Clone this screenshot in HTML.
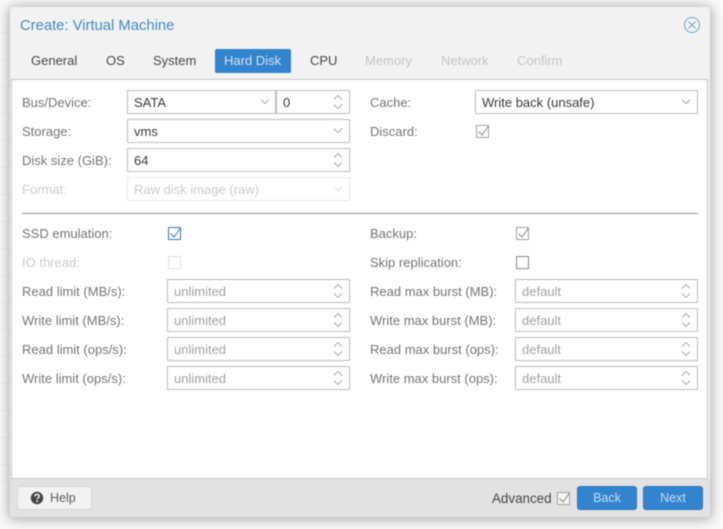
<!DOCTYPE html>
<html><head><meta charset="utf-8"><style>
html,body{margin:0;padding:0;width:723px;height:529px;overflow:hidden;background:#fafafa}
body{position:relative;font:13px/16px "Liberation Sans",Arial,sans-serif;color:#404040}
div,span,svg{position:absolute;box-sizing:border-box}
#w{left:0;top:0;width:723px;height:529px;filter:blur(.4px);background:#fafafa}
.t{white-space:nowrap;margin-top:1px}
.l{color:#757575;white-space:nowrap;margin-top:1px}
.dl{color:#cbcbcb;white-space:nowrap;margin-top:1px}
.f{background:#fff;border:1px solid #bcbcbc;height:24px}
.v{white-space:nowrap;color:#3a3a3a;margin-top:1px}
.p{color:#a2a2a2;white-space:nowrap;margin-top:1px}
.tab{top:53px;white-space:nowrap;color:#484848}
.tab.d{color:#c4c4c4}
.c{width:13px;height:13px;border:1px solid #a0a0a0;background:#fff}
.btn{top:486px;height:24px;width:60px;background:#3384cf;border:1px solid #2d77bb;border-radius:3px;color:#c4dcf2;text-align:center;line-height:22px;font-size:12.5px}
.sl{left:0;height:1px;width:10px;background:#f0f0f0}
svg.d{stroke:#aaa}
</style></head><body><div id="w">
<div class="sl" style="top:32px"></div><div class="sl" style="top:59px"></div><div class="sl" style="top:86px"></div><div class="sl" style="top:113px"></div><div class="sl" style="top:140px"></div><div class="sl" style="top:167px"></div><div class="sl" style="top:194px"></div><div class="sl" style="top:221px"></div><div class="sl" style="top:248px"></div><div class="sl" style="top:275px"></div><div class="sl" style="top:302px"></div><div class="sl" style="top:329px"></div><div class="sl" style="top:356px"></div><div class="sl" style="top:383px"></div><div class="sl" style="top:410px"></div><div class="sl" style="top:437px"></div><div class="sl" style="top:464px"></div><div class="sl" style="top:481px"></div>

<div style="left:10px;top:7px;width:700px;height:510px;background:#f2f2f2;border-radius:4px;box-shadow:0 1px 12px 2px rgba(0,0,0,.3);overflow:hidden">
  <div style="left:0;top:472px;width:700px;height:38px;background:#e2e2e2"></div>
</div>

<div class="t" style="left:20px;top:16px;font-size:14.8px;line-height:18px;color:#4089cc">Create: Virtual Machine</div>
<svg style="left:683px;top:16px" width="18" height="18" viewBox="0 0 18 18" fill="none" stroke="#6aa3d8" stroke-width="1"><circle cx="9" cy="9" r="7.5"/><path d="M5.5 5.5l7 7M12.5 5.5l-7 7"/></svg>

<div class="tab" style="left:31px">General</div>
<div class="tab" style="left:106px">OS</div>
<div class="tab" style="left:153px">System</div>
<div style="left:215px;top:49px;width:76px;height:24px;background:#3384cf;border-radius:2px"></div>
<div class="tab" style="left:224px;color:#cfe2f3">Hard Disk</div>
<div class="tab" style="left:310px">CPU</div>
<div class="tab d" style="left:365px">Memory</div>
<div class="tab d" style="left:441px">Network</div>
<div class="tab d" style="left:517px">Confirm</div>

<div style="left:11px;top:79px;width:697px;height:400px;background:#fff;border:1px solid #c4c4c4;border-bottom-color:#c8c8c8"></div>

<div class="l" style="left:22px;top:94px">Bus/Device:</div>
<div class="f" style="left:127px;top:90px;width:149px"></div>
<div class="v" style="left:134px;top:94px">SATA</div>
<svg class="d" style="left:259px;top:97px" width="12" height="9" fill="none"><path d="M2 2.5l4 4 4-4"/></svg>
<div class="f" style="left:276px;top:90px;width:74px"></div>
<div class="v" style="left:283px;top:94px">0</div>
<svg class="d" style="left:332px;top:94px" width="12" height="16" fill="none"><path d="M2 5.5l4-4 4 4M2 10.5l4 4 4-4"/></svg>

<div class="l" style="left:22px;top:123px">Storage:</div>
<div class="f" style="left:127px;top:119px;width:223px"></div>
<div class="v" style="left:134px;top:123px">vms</div>
<svg class="d" style="left:332px;top:126px" width="12" height="9" fill="none"><path d="M2 2.5l4 4 4-4"/></svg>

<div class="l" style="left:22px;top:152px">Disk size (GiB):</div>
<div class="f" style="left:127px;top:148px;width:223px"></div>
<div class="v" style="left:134px;top:152px">64</div>
<svg class="d" style="left:332px;top:152px" width="12" height="16" fill="none"><path d="M2 5.5l4-4 4 4M2 10.5l4 4 4-4"/></svg>

<div class="dl" style="left:22px;top:181px">Format:</div>
<div class="f" style="left:127px;top:177px;width:223px;border-color:#e6e6e6"></div>
<div class="dl" style="left:134px;top:181px">Raw disk image (raw)</div>
<svg style="left:332px;top:184px" width="12" height="9" fill="none" stroke="#ddd"><path d="M2 2.5l4 4 4-4"/></svg>

<div class="l" style="left:370px;top:94px">Cache:</div>
<div class="f" style="left:475px;top:90px;width:223px"></div>
<div class="v" style="left:482px;top:94px">Write back (unsafe)</div>
<svg class="d" style="left:680px;top:97px" width="12" height="9" fill="none"><path d="M2 2.5l4 4 4-4"/></svg>

<div class="l" style="left:370px;top:123px">Discard:</div>
<div class="c" style="left:476px;top:125px"></div>
<svg style="left:476px;top:125px" width="14" height="13" fill="none" stroke="#888"><path d="M2.5 6.5l3.5 3.5 6.5-9"/></svg>

<div style="left:22px;top:213px;width:676px;height:1px;background:#8e8e8e"></div>

<div class="l" style="left:22px;top:225px">SSD emulation:</div>
<div class="c" style="left:168px;top:227px;border-color:#2a78c4"></div>
<svg style="left:168px;top:227px" width="14" height="13" fill="none" stroke="#2a78c4"><path d="M2.5 6.5l3.5 3.5 6.5-9"/></svg>
<div class="dl" style="left:22px;top:254px">IO thread:</div>
<div class="c" style="left:168px;top:256px;border-color:#e0e0e0"></div>

<div class="l" style="left:370px;top:225px">Backup:</div>
<div class="c" style="left:516px;top:227px"></div>
<svg style="left:516px;top:227px" width="14" height="13" fill="none" stroke="#888"><path d="M2.5 6.5l3.5 3.5 6.5-9"/></svg>
<div class="l" style="left:370px;top:254px">Skip replication:</div>
<div class="c" style="left:516px;top:256px;border-color:#888"></div>

<div class="l" style="left:22px;top:283px">Read limit (MB/s):</div>
<div class="f" style="left:167px;top:279px;width:183px"></div>
<div class="p" style="left:174px;top:283px">unlimited</div>
<svg class="d" style="left:332px;top:283px" width="12" height="16" fill="none"><path d="M2 5.5l4-4 4 4M2 10.5l4 4 4-4"/></svg>
<div class="l" style="left:22px;top:312px">Write limit (MB/s):</div>
<div class="f" style="left:167px;top:308px;width:183px"></div>
<div class="p" style="left:174px;top:312px">unlimited</div>
<svg class="d" style="left:332px;top:312px" width="12" height="16" fill="none"><path d="M2 5.5l4-4 4 4M2 10.5l4 4 4-4"/></svg>
<div class="l" style="left:22px;top:341px">Read limit (ops/s):</div>
<div class="f" style="left:167px;top:337px;width:183px"></div>
<div class="p" style="left:174px;top:341px">unlimited</div>
<svg class="d" style="left:332px;top:341px" width="12" height="16" fill="none"><path d="M2 5.5l4-4 4 4M2 10.5l4 4 4-4"/></svg>
<div class="l" style="left:22px;top:370px">Write limit (ops/s):</div>
<div class="f" style="left:167px;top:366px;width:183px"></div>
<div class="p" style="left:174px;top:370px">unlimited</div>
<svg class="d" style="left:332px;top:370px" width="12" height="16" fill="none"><path d="M2 5.5l4-4 4 4M2 10.5l4 4 4-4"/></svg>

<div class="l" style="left:370px;top:283px">Read max burst (MB):</div>
<div class="f" style="left:515px;top:279px;width:183px"></div>
<div class="p" style="left:522px;top:283px">default</div>
<svg class="d" style="left:680px;top:283px" width="12" height="16" fill="none"><path d="M2 5.5l4-4 4 4M2 10.5l4 4 4-4"/></svg>
<div class="l" style="left:370px;top:312px">Write max burst (MB):</div>
<div class="f" style="left:515px;top:308px;width:183px"></div>
<div class="p" style="left:522px;top:312px">default</div>
<svg class="d" style="left:680px;top:312px" width="12" height="16" fill="none"><path d="M2 5.5l4-4 4 4M2 10.5l4 4 4-4"/></svg>
<div class="l" style="left:370px;top:341px">Read max burst (ops):</div>
<div class="f" style="left:515px;top:337px;width:183px"></div>
<div class="p" style="left:522px;top:341px">default</div>
<svg class="d" style="left:680px;top:341px" width="12" height="16" fill="none"><path d="M2 5.5l4-4 4 4M2 10.5l4 4 4-4"/></svg>
<div class="l" style="left:370px;top:370px">Write max burst (ops):</div>
<div class="f" style="left:515px;top:366px;width:183px"></div>
<div class="p" style="left:522px;top:370px">default</div>
<svg class="d" style="left:680px;top:370px" width="12" height="16" fill="none"><path d="M2 5.5l4-4 4 4M2 10.5l4 4 4-4"/></svg>

<div style="left:17px;top:486px;width:75px;height:24px;background:#f2f2f2;border:1px solid #d6d6d6;border-radius:3px"></div>
<svg style="left:30px;top:491px" width="14" height="14" viewBox="0 0 14 14"><circle cx="7" cy="7" r="6.2" fill="#444"/><path d="M4.9 5.4c0-2.7 4.3-2.7 4.3-.2 0 1.6-2 1.6-2 3" fill="none" stroke="#f2f2f2" stroke-width="1.5"/><rect x="6.3" y="9.3" width="1.7" height="1.7" fill="#f2f2f2"/></svg>
<div class="t" style="left:50px;top:489px;color:#5c5c5c;font-size:12.5px">Help</div>

<div class="t" style="left:492px;top:490px;color:#484848;font-size:13.4px">Advanced</div>
<div class="c" style="left:557px;top:492px;background:#f6f6f6"></div>
<svg style="left:557px;top:492px" width="14" height="13" fill="none" stroke="#888"><path d="M2.5 6.5l3.5 3.5 6.5-9"/></svg>
<div class="btn" style="left:577px">Back</div>
<div class="btn" style="left:643px">Next</div>
</div></body></html>
